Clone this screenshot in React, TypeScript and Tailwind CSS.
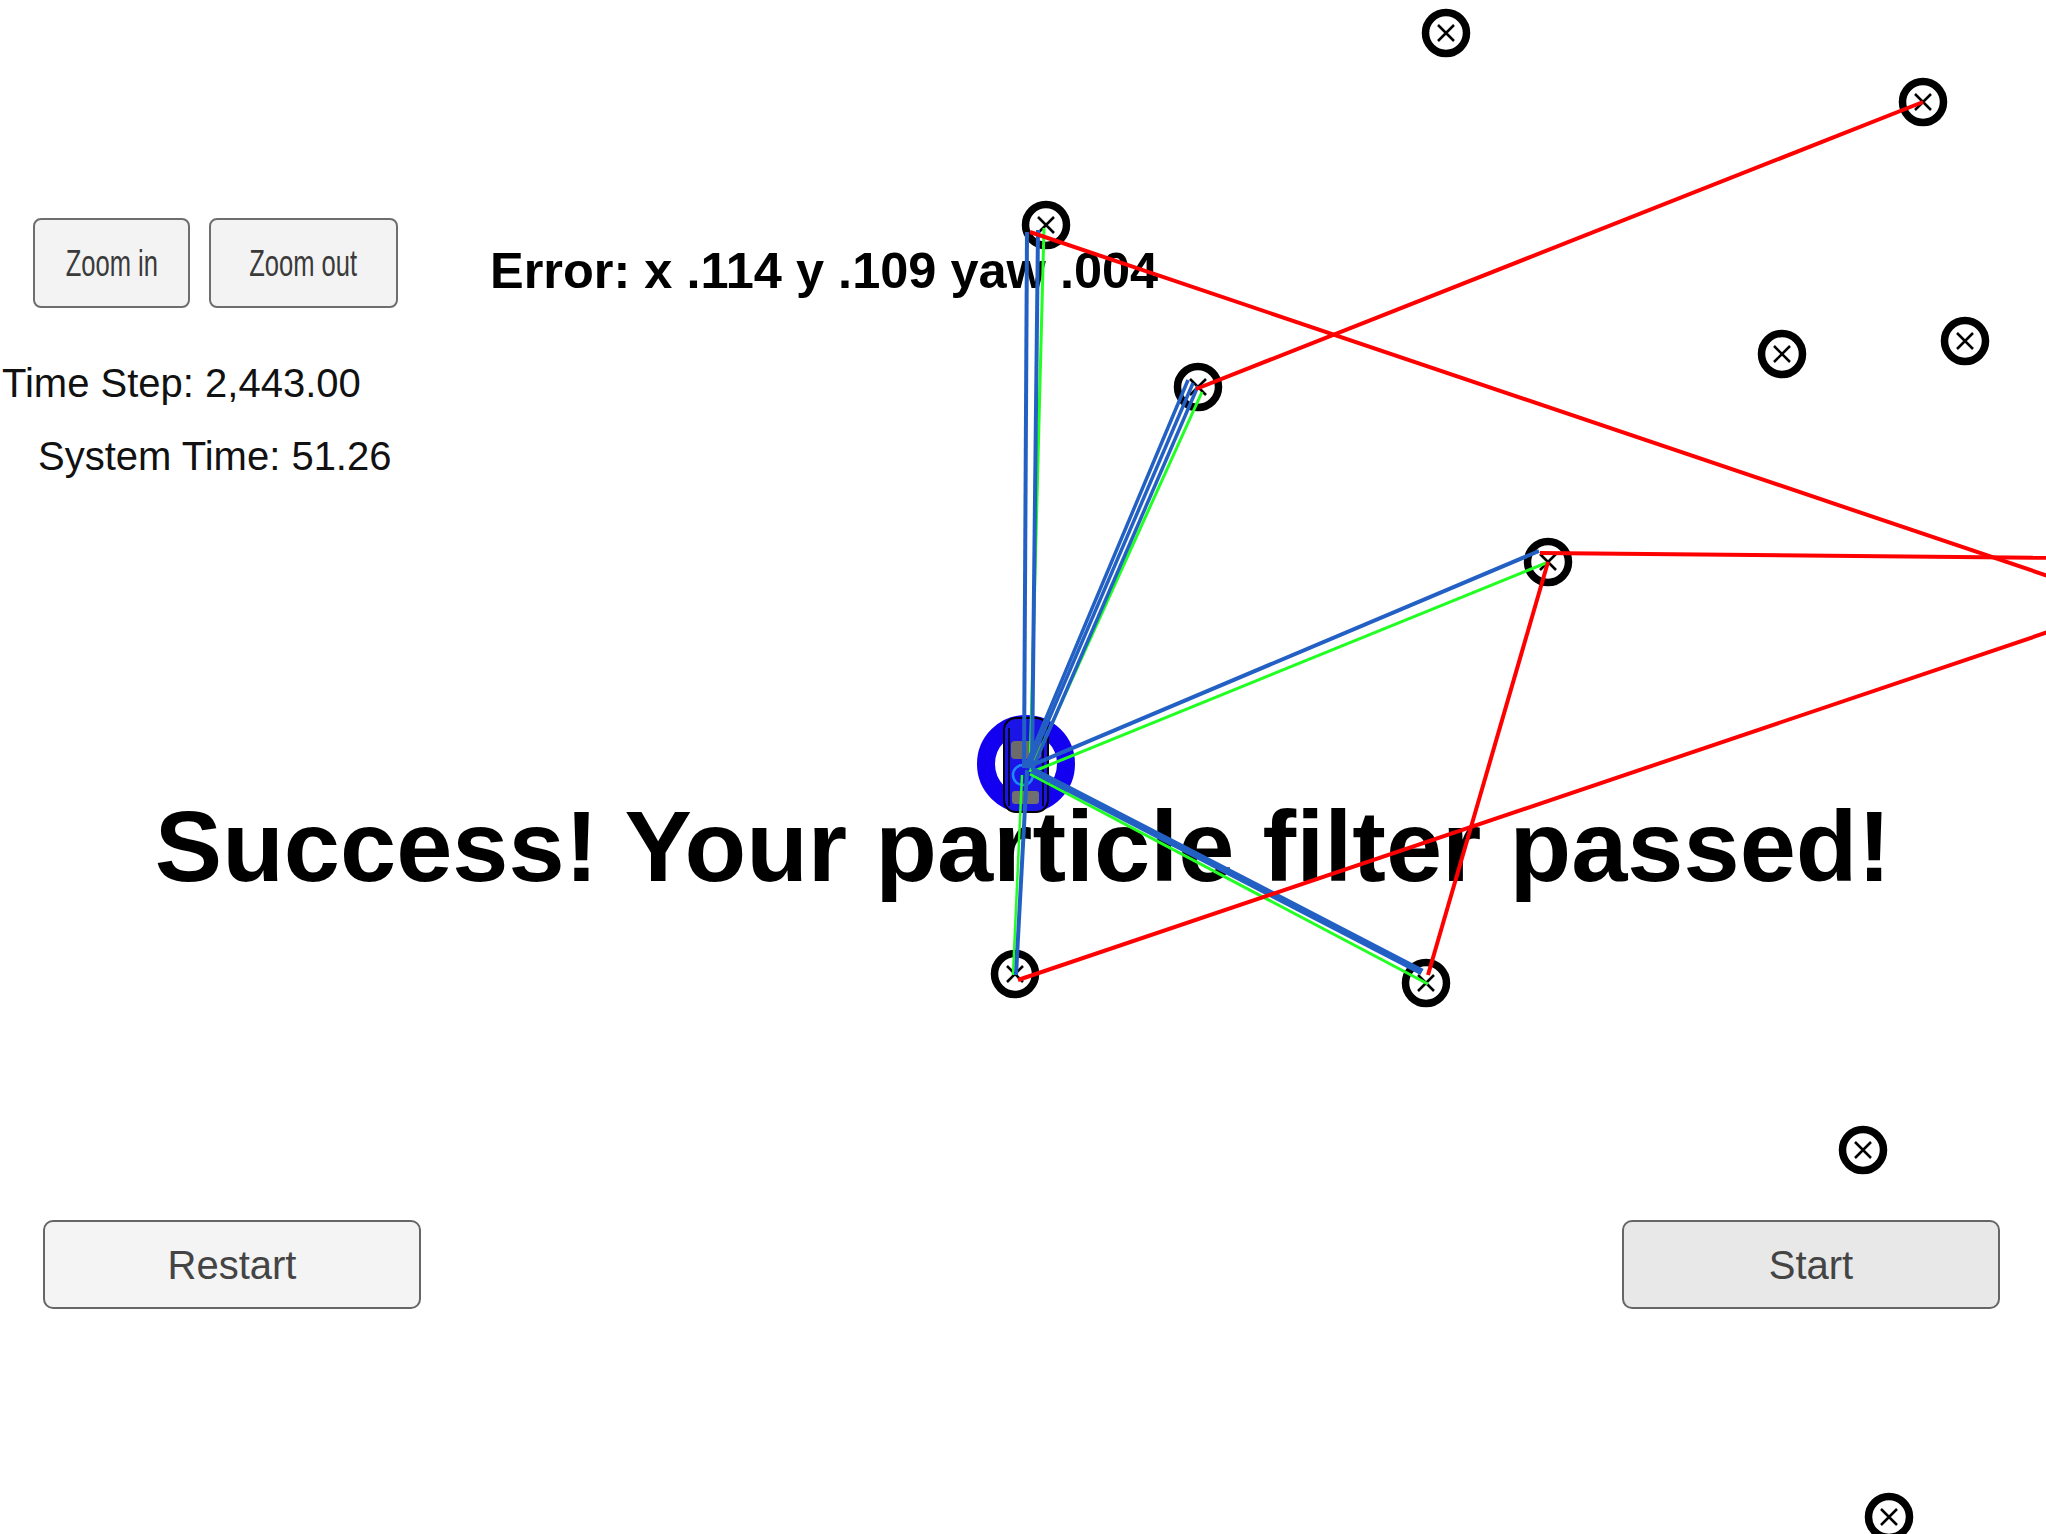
type Seg = [number, number, number, number, number];

// landmark centres on the map
const landmarks: [number, number][] = [
  [1446, 33],
  [1923, 102],
  [1046, 225],
  [1198, 387],
  [1782, 354],
  [1965, 341],
  [1548, 562],
  [1015, 974],
  [1426, 983],
  [1863, 1150],
  [1889, 1517],
];

// ground truth associations
const redLines: Seg[] = [
  [1030, 232, 2060, 580, 4],
  [1196, 389, 1923, 102, 4],
  [1540, 553, 2060, 558, 4],
  [1548, 562, 1428, 975, 4],
  [1018, 980, 2060, 628, 4],
];

// particle observations
const blueLines: Seg[] = [
  [1024, 768, 1027, 232, 4],
  [1032, 768, 1038, 230, 4],
  [1025, 768, 1188, 380, 3.5],
  [1028, 768, 1193, 383, 3.5],
  [1032, 770, 1198, 386, 3.5],
  [1030, 766, 1539, 551, 4],
  [1032, 770, 1422, 972, 7],
  [1027, 770, 1016, 975, 4],
];

const greenLines: Seg[] = [
  [1030, 768, 1044, 228, 3],
  [1030, 772, 1202, 392, 3],
  [1032, 772, 1546, 563, 3],
  [1030, 774, 1428, 984, 3],
  [1022, 775, 1013, 975, 2.5],
];

function Landmark({ x, y }: { x: number; y: number }) {
  return (
    <g>
      <circle cx={x} cy={y} r={20.5} fill="none" stroke="#000" strokeWidth={7.5} />
      <path
        d={`M${x - 8} ${y - 8}L${x + 8} ${y + 8}M${x + 8} ${y - 8}L${x - 8} ${y + 8}`}
        stroke="#000"
        strokeWidth={2.5}
      />
    </g>
  );
}

function Lines({ segs, color }: { segs: Seg[]; color: string }) {
  return (
    <>
      {segs.map(([x1, y1, x2, y2, w], i) => (
        <line key={i} x1={x1} y1={y1} x2={x2} y2={y2} stroke={color} strokeWidth={w} />
      ))}
    </>
  );
}

function Car() {
  return (
    <g>
      <circle cx={1026} cy={764} r={40} fill="none" stroke="#1400f0" strokeWidth={18} />
      <rect x={1004} y={718} width={44} height={94} rx={12} fill="#1a14e6" stroke="#000" strokeWidth={2} />
      <rect x={1011} y={741} width={30} height={18} rx={4} fill="#6b6b6b" />
      <rect x={1012} y={791} width={27} height={13} rx={3} fill="#707070" />
      <path d="M1009 728V806M1043 728V806" stroke="#000" strokeWidth={1.5} />
      <circle cx={1023} cy={775} r={10} fill="none" stroke="#1e88ff" strokeWidth={2.5} />
    </g>
  );
}

export default function App() {
  return (
    <div className="relative w-full h-[1534px] overflow-hidden bg-white font-['Liberation_Sans',Arial,sans-serif] text-[#111]">
      <div className="flex flex-col h-full">
        {/* TOP AREA */}
        <div className="flex items-start pt-[218px]">
          <div className="flex flex-col w-[398px]">
            <div className="flex gap-[19px] pl-[33px]">
              <button className="w-[157px] h-[90px] flex items-center justify-center rounded-[8px] border-2 border-[#6e6e6e] bg-[#f3f3f3] text-[#3a3a3a]">
                <span className="inline-block text-[37px] leading-none scale-x-[0.69] whitespace-nowrap">Zoom in</span>
              </button>
              <button className="w-[189px] h-[90px] flex items-center justify-center rounded-[8px] border-2 border-[#6e6e6e] bg-[#f3f3f3] text-[#3a3a3a]">
                <span className="inline-block text-[37px] leading-none scale-x-[0.69] whitespace-nowrap">Zoom out</span>
              </button>
            </div>
            <p className="mt-[55px] pl-[2px] text-[40px] leading-none whitespace-nowrap">Time Step: 2,443.00</p>
            <p className="mt-[33px] pl-[38px] text-[40px] leading-none whitespace-nowrap">System Time: 51.26</p>
          </div>
          <p className="mt-[28px] ml-[92px] text-[50.5px] font-bold leading-none text-black whitespace-nowrap">
            Error: x .114 y .109 yaw .004
          </p>
        </div>

        {/* RESULT */}
        <p className="mt-[320px] text-center text-[101px] font-bold leading-none text-black whitespace-nowrap">
          Success! Your particle filter passed!
        </p>

        {/* BOTTOM BUTTONS */}
        <div className="flex justify-between mt-[323px] pl-[43px] pr-[46px]">
          <button className="w-[378px] h-[89px] flex items-center justify-center rounded-[10px] border-2 border-[#666] bg-[#f4f4f4] text-[40px] text-[#444]">
            Restart
          </button>
          <button className="w-[378px] h-[89px] flex items-center justify-center rounded-[10px] border-2 border-[#666] bg-[#e8e8e8] text-[40px] text-[#444]">
            Start
          </button>
        </div>
      </div>

      {/* MAP CANVAS */}
      <svg className="absolute inset-0 pointer-events-none" width={2046} height={1534} viewBox="0 0 2046 1534">
        {landmarks.map(([x, y], i) => (
          <Landmark key={i} x={x} y={y} />
        ))}
        <Car />
        <Lines segs={greenLines} color="#22ff22" />
        <Lines segs={blueLines} color="#2360c4" />
        <Lines segs={redLines} color="#ff0000" />
      </svg>
    </div>
  );
}
